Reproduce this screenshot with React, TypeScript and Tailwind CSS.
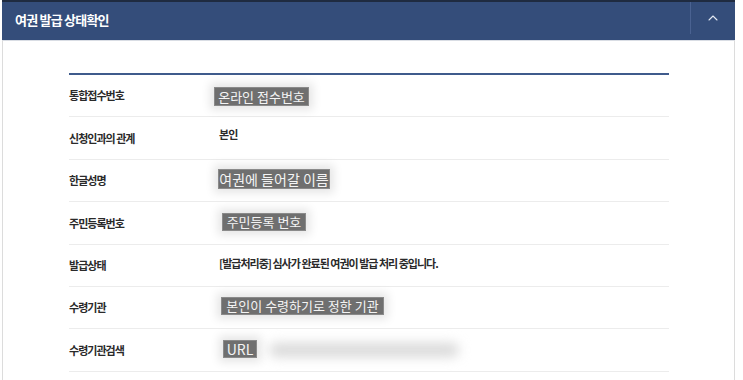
import { ChevronUp } from "lucide-react";

const font = { fontFamily: '"Noto Sans CJK KR", "Noto Sans", sans-serif' };

type Row = {
  label: string;
  value: React.ReactNode;
};

function Mask({
  text,
  className,
}: {
  text: string;
  className: string;
}) {
  return (
    <span
      className={`flex items-center justify-center whitespace-nowrap border border-[#8a8a8a] bg-[#6f6f6f] leading-none text-[#f4f4f4] shadow-[0_0_10px_4px_rgba(0,0,0,0.10)] ${className}`}
    >
      {text}
    </span>
  );
}

const rows: Row[] = [
  {
    label: "통합접수번호",
    value: <Mask text="온라인 접수번호" className="ml-[-5px] mt-[2px] h-[19px] w-[95px] text-[13px]" />,
  },
  {
    label: "신청인과의 관계",
    value: <span className="mt-[-8px] text-[11px] font-bold tracking-[-0.09em] text-[#2a2a2a]">본인</span>,
  },
  {
    label: "한글성명",
    value: <Mask text="여권에 들어갈 이름" className="ml-[-1px] mt-[-2px] h-[20px] w-[112px] text-[14px]" />,
  },
  {
    label: "주민등록번호",
    value: <Mask text="주민등록 번호" className="ml-[3px] mt-[-2px] h-[18px] w-[84px] text-[13px]" />,
  },
  {
    label: "발급상태",
    value: (
      <span className="mt-[-4px] whitespace-nowrap text-[11px] font-bold tracking-[-0.09em] text-[#2a2a2a]">
        [발급처리중] 심사가 완료된 여권이 발급 처리 중입니다.
      </span>
    ),
  },
  {
    label: "수령기관",
    value: <Mask text="본인이 수령하기로 정한 기관" className="ml-[2px] mt-[-4px] h-[18px] w-[163px] text-[13px]" />,
  },
  {
    label: "수령기관검색",
    value: (
      <span className="flex items-center">
        <Mask text="URL" className="ml-[4px] mt-[-2px] h-[18px] w-[34px] text-[14px]" />
        <span className="ml-[12px] h-[14px] w-[190px] rounded-full bg-[#d9d9d9] blur-[6px]" />
      </span>
    ),
  },
];

export default function App() {
  return (
    <div className="h-[380px] w-[743px] overflow-hidden bg-white" style={font}>
      <div className="ml-[2px] w-[733px] border-t-2 border-[#1f2b40]">
        <div className="flex h-[38px] items-center justify-between bg-[#344d7a]">
          <h2 className="ml-[13px] mt-[-2px] text-[13px] font-bold tracking-[-0.06em] text-white">
            여권 발급 상태확인
          </h2>
          <div className="flex h-full items-center">
            <span className="h-[32px] w-px self-start bg-[#4a6291]" />
            <ChevronUp className="mx-[14px] mt-[-6px] h-[16px] w-[16px] text-[#e3e9f3]" strokeWidth={1.6} />
          </div>
        </div>
        <div className="h-[340px] border-x border-t border-[#d9dde4] border-x-[#dcdcdc] bg-white pt-[32px]">
          <div className="ml-[66px] w-[600px] border-t-2 border-[#3f5b8c]">
            {rows.map((row) => (
              <div key={row.label} className="flex h-[42.4px] items-center border-b border-[#ececec]">
                <span className="w-[150px] shrink-0 whitespace-nowrap text-[11px] font-bold tracking-[-0.09em] text-[#2a2a2a]">
                  {row.label}
                </span>
                {row.value}
              </div>
            ))}
          </div>
        </div>
      </div>
    </div>
  );
}
